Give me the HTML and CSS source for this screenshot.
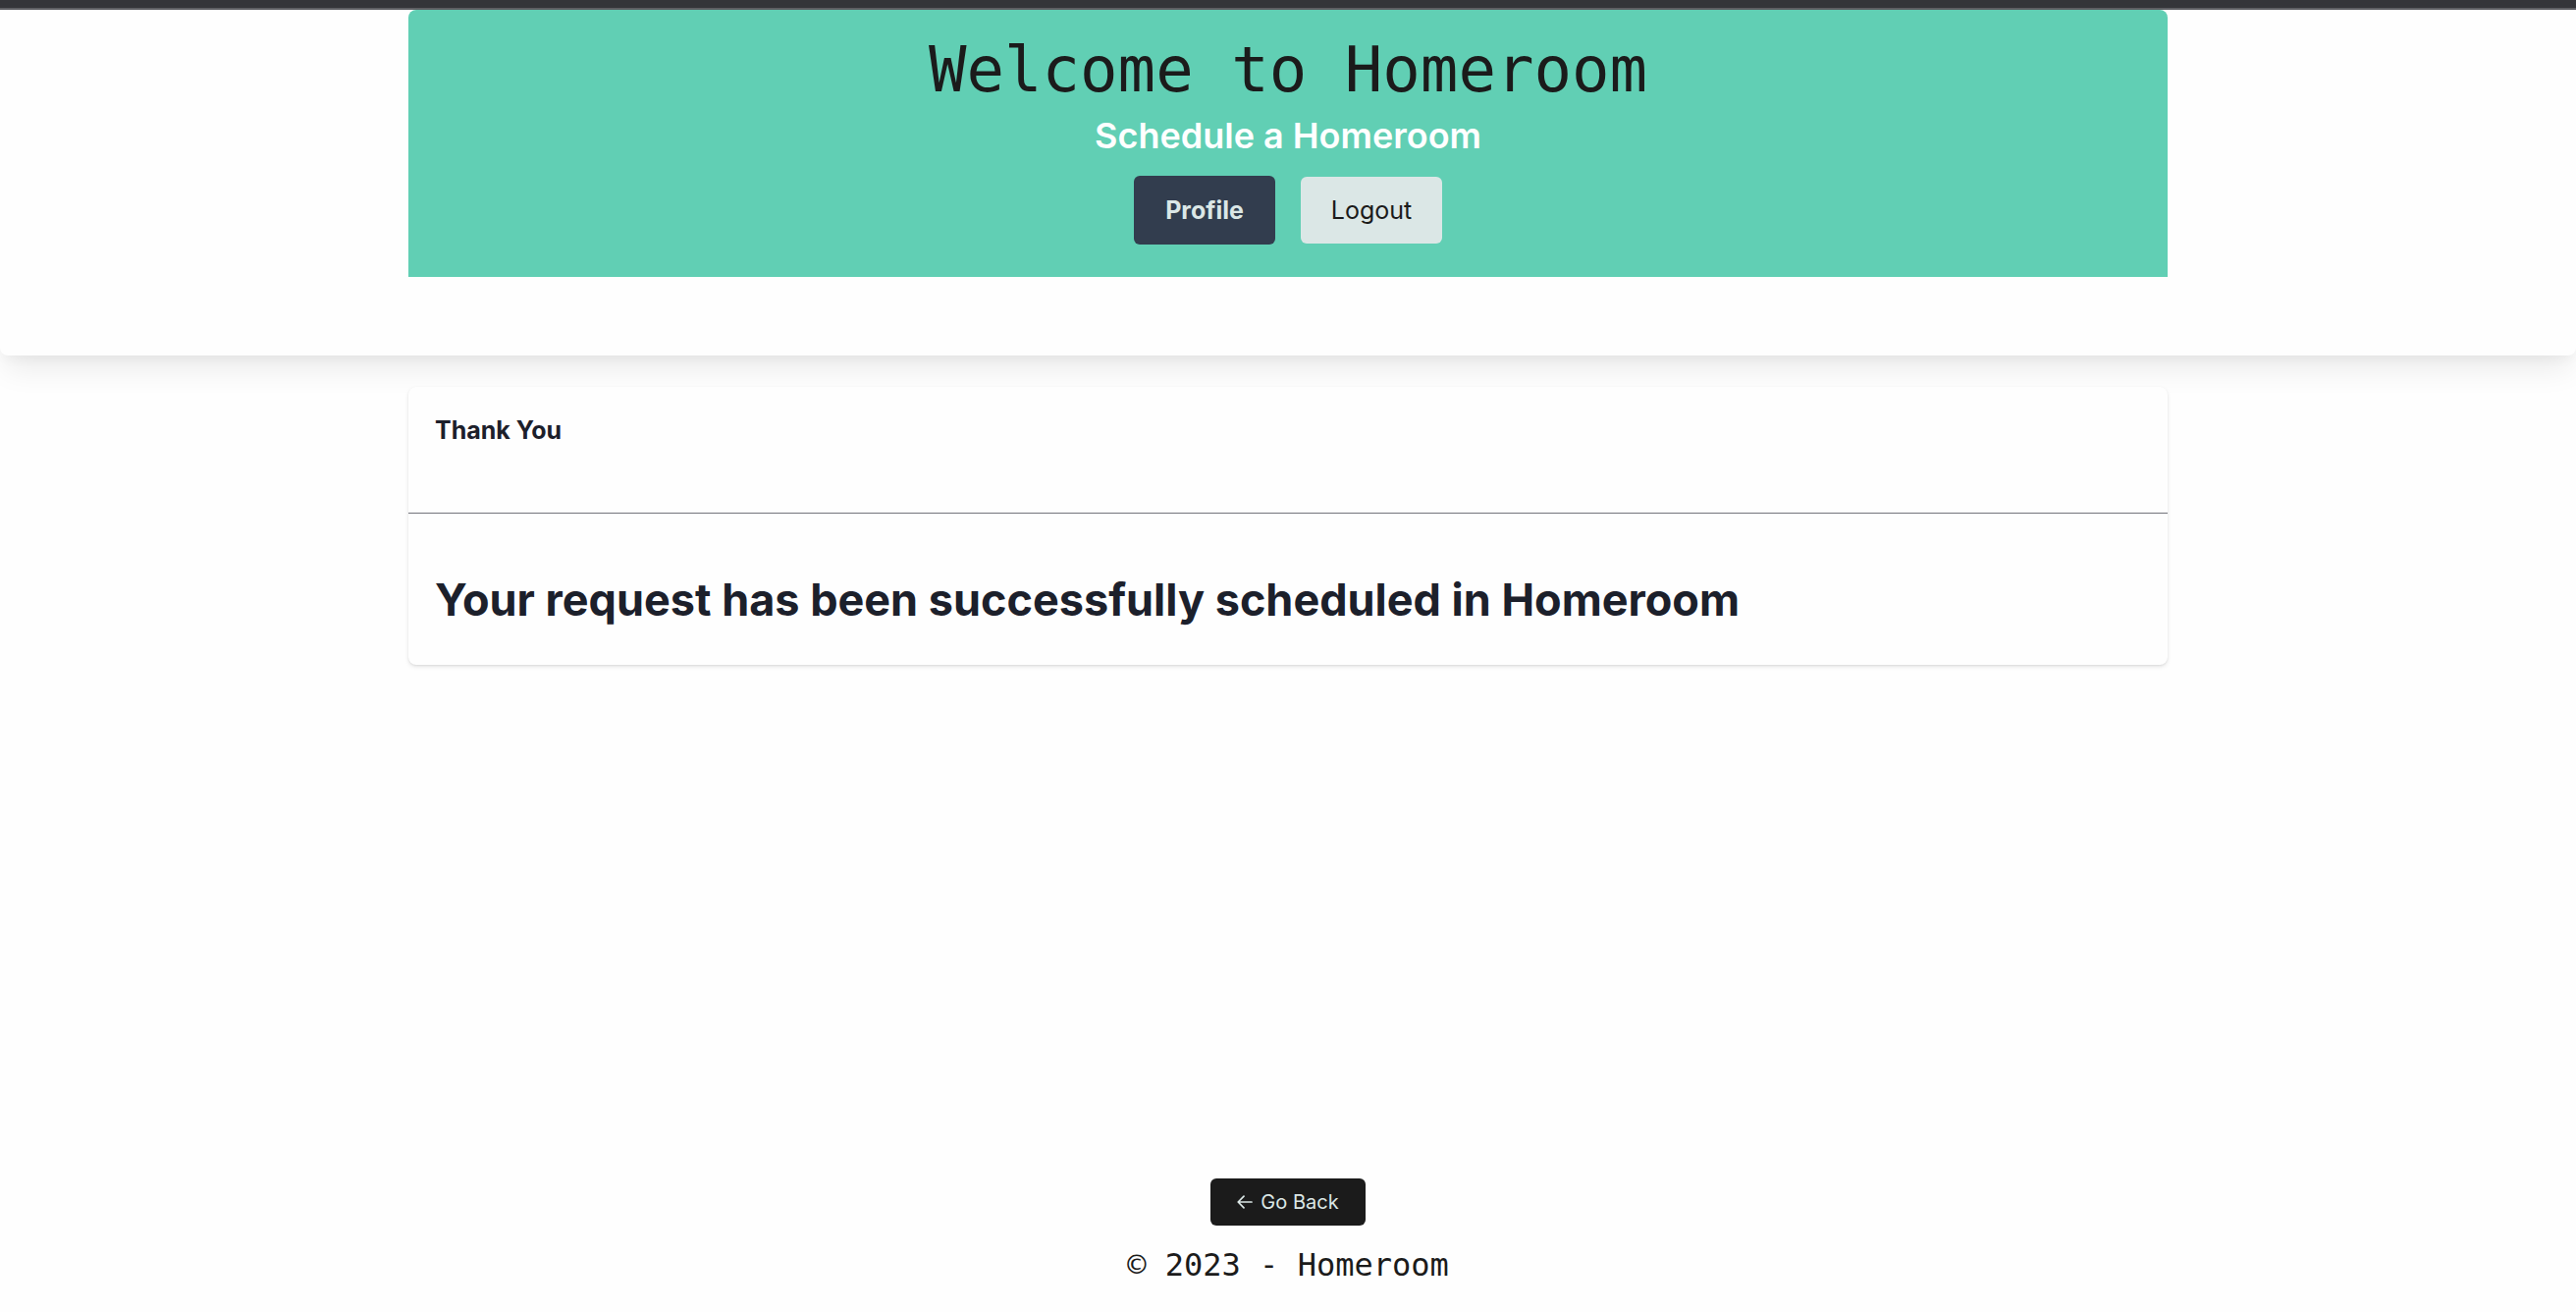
FILE: index.html
```html
<!DOCTYPE html>
<html lang="en">
<head>
<meta charset="utf-8">
<meta name="viewport" content="width=device-width, initial-scale=1">
<title>Homeroom</title>
<link rel="stylesheet" href="styles.css">
</head>
<body>
<div class="topbar"></div>
<header class="header">
  <div class="banner">
    <h1 class="banner-title">Welcome to Homeroom</h1>
    <p class="banner-subtitle">Schedule a Homeroom</p>
    <nav class="banner-actions">
      <button class="button button-profile" type="button">Profile</button>
      <button class="button button-logout" type="button">Logout</button>
    </nav>
  </div>
</header>
<main class="main">
  <section class="card">
    <div class="card-head">
      <h2 class="card-title">Thank You</h2>
    </div>
    <p class="card-message">Your request has been successfully scheduled in Homeroom</p>
  </section>
</main>
<footer class="footer">
  <button class="button-back" type="button"><svg class="arrow" viewBox="0 0 16 16" aria-hidden="true"><path d="M15 8H1.500M7 2.200 1.200 8 7 13.800" fill="none" stroke="currentColor" stroke-width="1.700" stroke-linecap="round" stroke-linejoin="round"/></svg>Go Back</button>
  <p class="copyright">© 2023 - Homeroom</p>
</footer>
</body>
</html>
```
FILE: styles.css
```css
* {
  box-sizing: border-box;
}

body {
  margin: 0;
  min-height: 100vh;
  display: flex;
  flex-direction: column;
  background: #fefefe;
  color: #1b1b1b;
  font-family: Inter, "Liberation Sans", sans-serif;
}

h1,
h2,
p {
  margin: 0;
}

button {
  border: 0;
  font-family: inherit;
  cursor: pointer;
}

.topbar {
  height: 10px;
  background: #343539;
  border-bottom: 2px solid #5e5f63;
}

.header {
  padding: 0 32px 80px;
  border-radius: 0 0 8px 8px;
  background: #fefefe;
  box-shadow: 0 20px 30px -6px rgba(0, 0, 0, 0.08), 0 8px 12px -4px rgba(0, 0, 0, 0.04);
}

.banner {
  max-width: 1792px;
  margin: 0 auto;
  padding: 24px 32px 33px;
  border-radius: 8px 8px 0 0;
  background: #61cfb4;
  text-align: center;
}

.banner-title {
  font: 400 64px/74px "DejaVu Sans Mono", monospace;
}

.banner-subtitle {
  color: #fff;
  font-size: 36px;
  font-weight: 600;
  line-height: 60px;
}

.banner-actions {
  display: flex;
  justify-content: center;
  align-items: center;
  gap: 26px;
  margin-top: 11px;
}

.button {
  width: 144px;
  height: 68px;
  padding: 0;
  border-radius: 6px;
  font-size: 25px;
}

.button-profile {
  height: 70px;
  background: #323d4e;
  color: #dbe7e6;
  font-weight: 700;
}

.button-logout {
  background: #dbe7e6;
  color: #1b1b1b;
}

.main {
  flex: 1;
  padding: 32px;
}

.card {
  max-width: 1792px;
  margin: 0 auto;
  border-radius: 8px;
  background: #fefefe;
  box-shadow: 0 2px 4px rgba(0, 0, 0, 0.1), 0 1px 2px rgba(0, 0, 0, 0.06);
  color: #1c202b;
}

.card-head {
  padding: 24px 27px 64px;
  border-bottom: 1px solid #73747c;
}

.card-title {
  font-size: 25px;
  font-weight: 700;
  line-height: 40px;
}

.card-message {
  padding: 56px 27px 34px;
  font-size: 45px;
  font-weight: 700;
  line-height: 64px;
}

.footer {
  display: flex;
  flex-direction: column;
  align-items: center;
  gap: 20px;
  padding-bottom: 28px;
}

.button-back {
  display: flex;
  justify-content: center;
  align-items: center;
  gap: 8px;
  width: 158px;
  height: 48px;
  padding: 0;
  border-radius: 6px;
  background: #1b1b1b;
  color: #dbe7e6;
  font-size: 20px;
}

.arrow {
  width: 16px;
  height: 16px;
}

.copyright {
  font: 400 32px/40px "DejaVu Sans Mono", monospace;
}
```
